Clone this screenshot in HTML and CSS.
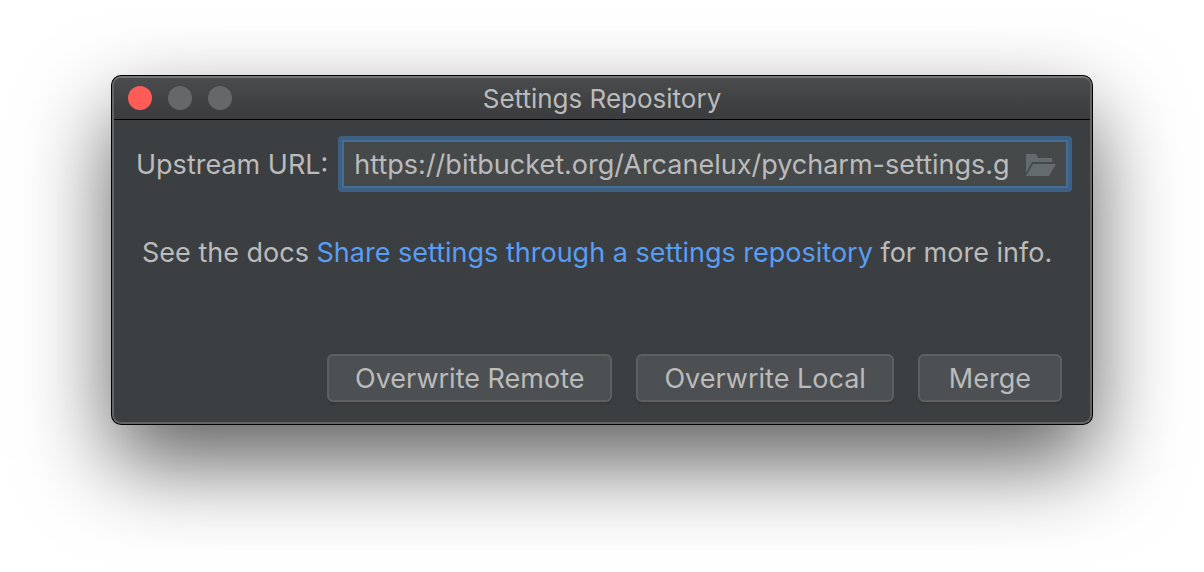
FILE: index.html
```html
<!DOCTYPE html>
<html lang="en">
<head>
<meta charset="utf-8">
<meta name="viewport" content="width=device-width, initial-scale=1">
<title>Settings Repository</title>
<link rel="stylesheet" href="styles.css">
</head>
<body>
<main class="window">
  <header class="titlebar">
    <div class="controls">
      <button class="control control-close" type="button" aria-label="Close"></button>
      <button class="control" type="button" aria-label="Minimize" disabled></button>
      <button class="control" type="button" aria-label="Zoom" disabled></button>
    </div>
    <h1 class="title">Settings Repository</h1>
  </header>
  <form class="content">
    <div class="field-row">
      <label class="label" for="url">Upstream URL:</label>
      <div class="field">
        <input id="url" class="field-input" type="text" value="https://bitbucket.org/Arcanelux/pycharm-settings.g" spellcheck="false">
        <button class="browse" type="button" aria-label="Browse">
          <svg class="folder" viewBox="0 0 30 22" aria-hidden="true">
            <path d="M0 0H10L12 4H26V8H6L0 19Z"/>
            <path d="M7 10H30L23 22H0Z"/>
          </svg>
        </button>
      </div>
    </div>
    <p class="docs">See the docs <a class="link" href="#docs">Share settings through a settings repository</a> for more info.</p>
    <div class="actions">
      <button class="button" type="button">Overwrite Remote</button>
      <button class="button" type="button">Overwrite Local</button>
      <button class="button button-merge" type="button">Merge</button>
    </div>
  </form>
</main>
</body>
</html>
```

FILE: styles.css
```css
* {
  box-sizing: border-box;
}

body {
  min-height: 100vh;
  margin: 0;
  padding: 76px 112px;
  background: #fff;
  color: #bbb;
  font-family: Inter, "Liberation Sans", sans-serif;
  font-size: 27px;
  line-height: 34px;
}

button,
input {
  font: inherit;
  color: inherit;
}

.window {
  border: 2px solid #626465;
  border-top-color: #757677;
  border-radius: 9px;
  background: #3c3f41;
  box-shadow: 0 0 0 1px #000, 0 38px 88px rgba(0, 0, 0, 0.64);
}

.titlebar {
  display: grid;
  grid-template-columns: 1fr auto 1fr;
  align-items: center;
  height: 42px;
  padding: 0 14px;
  border-bottom: 1px solid #000;
  border-radius: 7px 7px 0 0;
  background: linear-gradient(#4a4b4d, #3a3b3d);
}

.controls {
  display: flex;
  gap: 16px;
  padding-bottom: 2px;
}

.control {
  width: 24px;
  height: 24px;
  padding: 0;
  border: 0;
  border-radius: 50%;
  background: #666769;
}

.control-close {
  background: #ff5b57;
}

.title {
  margin: 0;
  font-size: 26px;
  font-weight: 400;
}

.content {
  padding: 16px 18px 20px 22px;
}

.field-row {
  display: flex;
  align-items: center;
  gap: 10px;
}

.label {
  padding-top: 2px;
}

.field {
  display: flex;
  flex: 1;
  align-items: center;
  gap: 10px;
  min-width: 0;
  height: 56px;
  padding: 2px 12px 0;
  border: 4px solid #3d6185;
  border-radius: 4px;
  background: #45494a;
  box-shadow: inset 0 0 0 2px #466d94;
}

.field-input {
  flex: 1;
  min-width: 0;
  padding: 0;
  border: 0;
  outline: 0;
  background: none;
}

.browse {
  display: flex;
  padding: 0;
  border: 0;
  background: none;
}

.folder {
  width: 30px;
  height: 22px;
  fill: #646b6e;
}

.docs {
  margin: 44px 0 84px;
  padding-left: 6px;
  white-space: nowrap;
}

.link {
  color: #589df6;
  text-decoration: none;
}

.actions {
  display: flex;
  justify-content: flex-end;
  gap: 24px;
  padding-right: 10px;
}

.button {
  height: 48px;
  padding: 2px 26px 0;
  border: 2px solid #5e6060;
  border-radius: 6px;
  background: #4c5052;
  box-shadow: 0 3px 0 #37393a;
}

.button-merge {
  padding: 2px 29px 0;
}
```
